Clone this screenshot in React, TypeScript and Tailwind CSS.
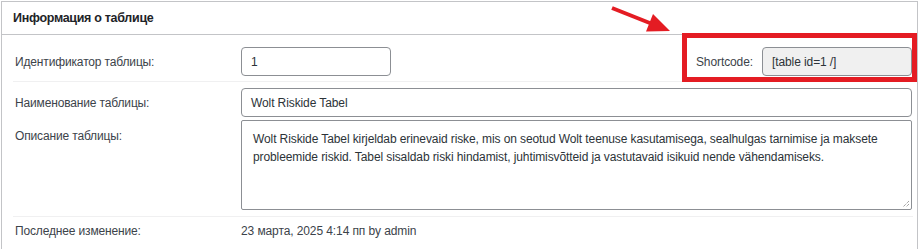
import React from "react";

const font = { fontFamily: '"Liberation Sans", Arial, sans-serif' };

function Label({ children }: { children: React.ReactNode }) {
  return (
    <div className="w-[228px] shrink-0 pl-[2px] text-[12px] tracking-[-0.15px] text-[#3c434a]">
      {children}
    </div>
  );
}

export default function App() {
  return (
    <div
      className="relative w-[919px] h-[249px] overflow-hidden bg-white"
      style={font}
    >
      <div className="ml-[1px] mt-[1px] w-[917px] h-[260px] border-l border-t border-r border-[#c3c4c7] bg-white">
        {/* header */}
        <div className="h-[33px] border-b border-[#c3c4c7] pl-[11px] flex items-center">
          <h2 className="text-[12.5px] font-bold tracking-[-0.3px] text-[#1d2327] leading-none">
            Информация о таблице
          </h2>
        </div>

        <div className="pl-[11px] pr-[4px] text-[12px] tracking-[-0.1px]">
          {/* id row */}
          <div className="flex items-center pt-[12px] pb-[5px] border-b border-[#f0f0f1]">
            <Label>Идентификатор таблицы:</Label>
            <div className="w-[150px] h-[29px] rounded-[4px] border border-[#8c8f94] px-[9px] flex items-center text-[#2c3338]">
              1
            </div>
            <div className="ml-auto flex items-center pr-[1px]">
              <span className="text-[#3c434a] mr-[9px]">Shortcode:</span>
              <div className="w-[150px] h-[29px] rounded-[4px] border border-[#8c8f94] bg-[#f0f0f0] px-[9px] flex items-center text-[#2c3338]">
                [table id=1 /]
              </div>
            </div>
          </div>

          {/* name row */}
          <div className="flex items-center pt-[6px]">
            <Label>Наименование таблицы:</Label>
            <div className="flex-1 mr-[1px] h-[29px] rounded-[4px] border border-[#8c8f94] px-[9px] flex items-center text-[#2c3338]">
              Wolt Riskide Tabel
            </div>
          </div>

          {/* description row */}
          <div className="flex items-start pt-[3px] pb-[6px] border-b border-[#f0f0f1]">
            <div className="pt-[7px]">
              <Label>Описание таблицы:</Label>
            </div>
            <div className="relative flex-1 mr-[1px] h-[90px] rounded-[2px] border border-[#8c8f94] pl-[11px] pr-[8px] pt-[9px] leading-[18px] text-[#2c3338]">
              <div className="whitespace-nowrap">
                Wolt Riskide Tabel kirjeldab erinevaid riske, mis on seotud Wolt teenuse kasutamisega, sealhulgas tarnimise ja maksete
              </div>
              <div className="whitespace-nowrap">
                probleemide riskid. Tabel sisaldab riski hindamist, juhtimisvõtteid ja vastutavaid isikuid nende vähendamiseks.
              </div>
              <svg
                className="absolute right-[1px] bottom-[1px]"
                width="8"
                height="8"
                viewBox="0 0 8 8"
              >
                <path d="M7 1 L1 7 M7 4 L4 7" stroke="#7a7a7a" strokeWidth="1" strokeDasharray="1 1" />
              </svg>
            </div>
          </div>

          {/* modified row */}
          <div className="flex items-center pt-[5px]">
            <Label>Последнее изменение:</Label>
            <div className="text-[#3c434a]">
              23 марта, 2025 4:14 пп by admin
            </div>
          </div>
        </div>
      </div>

      {/* annotation overlay */}
      <div className="absolute left-[682px] top-[33px] w-[235px] h-[49px] border-[5px] border-[#e41c23] pointer-events-none" />
      <svg
        className="absolute left-0 top-0 pointer-events-none"
        width="919"
        height="249"
      >
        <line x1="612" y1="8" x2="651" y2="23.5" stroke="#e41c23" strokeWidth="4" />
        <polygon points="670,31 646,31.5 653,14" fill="#e41c23" />
      </svg>
    </div>
  );
}
